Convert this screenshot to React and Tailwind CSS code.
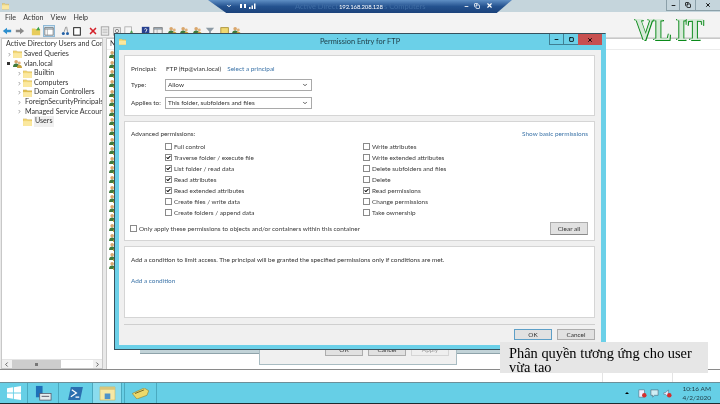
import { Check, ChevronDown, ChevronLeft, ChevronRight, Minus, Square, X, Copy } from "lucide-react";

const treeItems = [
  { label: "Saved Queries", indent: 5, arrow: "closed" },
  { label: "vlan.local", indent: 5, arrow: "open", icon: "domain" },
  { label: "Builtin", indent: 15, arrow: "closed" },
  { label: "Computers", indent: 15, arrow: "closed" },
  { label: "Domain Controllers", indent: 15, arrow: "closed", icon: "ou" },
  { label: "ForeignSecurityPrincipals", indent: 15, arrow: "closed" },
  { label: "Managed Service Accounts", indent: 15, arrow: "closed" },
  { label: "Users", indent: 15, selected: true },
];

const leftPerms = [
  ["Full control", false],
  ["Traverse folder / execute file", true],
  ["List folder / read data", true],
  ["Read attributes", true],
  ["Read extended attributes", true],
  ["Create files / write data", false],
  ["Create folders / append data", false],
];

const rightPerms = [
  ["Write attributes", false],
  ["Write extended attributes", false],
  ["Delete subfolders and files", false],
  ["Delete", false],
  ["Read permissions", true],
  ["Change permissions", false],
  ["Take ownership", false],
];

const userRows = Array.from({ length: 23 }, (_, i) => i);

const Folder = ({ color = "#f3d774", className = "w-[9px] h-[8px]" }) => (
  <svg viewBox="0 0 10 9" className={className}>
    <path d="M0 1h4l1 1h5v7H0z" fill={color} stroke="#c9a94a" strokeWidth="0.5" />
    <path d="M0 3.5h10V9H0z" fill="#fbe89f" />
  </svg>
);

const Users = () => (
  <svg viewBox="0 0 10 10" className="w-[9px] h-[9px] shrink-0">
    <circle cx="3.5" cy="3" r="2" fill="#d9a66c" />
    <path d="M0 9c0-3 1.5-4 3.5-4S7 6 7 9z" fill="#3f7a3c" />
    <circle cx="7" cy="4.5" r="1.6" fill="#e2b27a" />
    <path d="M4.5 10c0-2.5 1-3.5 2.500-3.500S10 7.500 10 10z" fill="#c9a23a" />
  </svg>
);

const ToolIcon = ({ children, className = "" }) => (
  <svg viewBox="0 0 12 12" className={`w-[10px] h-[10px] shrink-0 ${className}`}>
    {children}
  </svg>
);

const Perm = ({ label, on }) => (
  <div className="flex items-center gap-[2px] h-[11px] text-[6.4px] text-[#3a3a3a]">
    <span className="w-[7px] h-[7px] border-[0.5px] border-[#8a8a8a] bg-white flex items-center justify-center">
      {on && <Check className="w-[7px] h-[7px] text-black" strokeWidth={5} />}
    </span>
    <span className="whitespace-nowrap">{label}</span>
  </div>
);

const SelectBox = ({ value }) => (
  <div className="w-[147px] h-[12px] border border-[#a9a9a9] bg-white flex items-center justify-between pl-[2px] pr-[3px] text-[6.4px] text-[#333]">
    <span>{value}</span>
    <ChevronDown className="w-[6px] h-[6px] text-[#444]" strokeWidth={3.5} />
  </div>
);

const DialogBtn = ({ children, primary }) => (
  <div
    className={`w-[38px] h-[11px] flex items-center justify-center bg-[#e1e1e1] border text-[6.4px] text-[#333] ${
      primary ? "border-[#5d9fc7]" : "border-[#adadad]"
    }`}
  >
    {children}
  </div>
);

const RemoteBar = () => (
  <div className="absolute left-[208px] top-0 w-[304px] h-[13px] bg-gradient-to-b from-[#5f8fc4] via-[#24528f] to-[#1b427a] [clip-path:polygon(0_0,100%_0,95%_100%,6%_100%)] text-white">
    <ChevronDown className="absolute left-[18px] top-[3px] w-[6px] h-[6px]" strokeWidth={4} />
    <span className="absolute left-[32px] top-[4px] w-[6px] h-[4px] border-x-2 border-white" />
    <svg viewBox="0 0 8 7" className="absolute left-[41px] top-[2px] w-[8px] h-[7px]">
      <path d="M0 5h1.500v2H0zM2.500 3.500H4V7H2.500zM5 1.500h1.500V7H5z" fill="#fff" />
    </svg>
    <span className="absolute left-[87px] top-[1px] text-[7.5px] leading-[11px] text-[#3f6ca3] whitespace-nowrap">
      Active Direct
    </span>
    <span className="absolute left-[131px] top-[1px] w-[42px] text-center text-[6px] tracking-[-0.15px] leading-[11px] whitespace-nowrap">
      192.168.208.128
    </span>
    <span className="absolute left-[176px] top-[1px] text-[7.5px] leading-[11px] text-[#3f6ca3] whitespace-nowrap">
      s Computers
    </span>
    <Minus className="absolute left-[256px] top-[4px] w-[5px] h-[5px]" strokeWidth={4} />
    <Copy className="absolute left-[266px] top-[3px] w-[6px] h-[6px]" strokeWidth={3} />
    <X className="absolute left-[278px] top-[2px] w-[7px] h-[7px]" strokeWidth={4} />
  </div>
);

const Dialog = () => (
  <div className="absolute left-[114px] top-[33px] w-[492px] h-[317px] flex flex-col bg-[#6bd0e8] border border-[#37505c] border-r-[#6bd0e8]">
    <div className="relative h-[16px] shrink-0 flex items-center justify-center text-[7.4px] text-[#1d3a44]">
      <Folder className="absolute left-[4px] top-[3px] w-[7px] h-[9px]" />
      Permission Entry for FTP
      <div className="absolute right-[3px] top-0 flex h-[11px]">
        <div className="w-[15px] border border-t-0 border-[#3f7f93] flex items-center justify-center">
          <Minus className="w-[5px] h-[5px] text-black" strokeWidth={4} />
        </div>
        <div className="w-[14px] border-b border-[#3f7f93] flex items-center justify-center">
          <Square className="w-[5px] h-[5px] text-black" strokeWidth={4} />
        </div>
        <div className="w-[24px] bg-[#c75050] flex items-center justify-center">
          <X className="w-[6px] h-[6px] text-black" strokeWidth={3.5} />
        </div>
      </div>
    </div>
    <div className="flex-1 mx-[4px] mb-[4px] bg-[#f0f0f0] flex flex-col pl-[5px] pr-[6px] pt-[5px]">
      <div className="h-[61px] bg-white border border-[#d5d5d5] pl-[6px] pt-[7px] text-[6.4px] text-[#333] flex flex-col">
        <div className="flex items-center h-[11px]">
          <span className="w-[35px]">Principal:</span>
          <span>FTP (ftp@vlan.local)</span>
          <span className="ml-[6px] text-[#3c74a8]">Select a principal</span>
        </div>
        <div className="flex items-center mt-[4px] h-[14px]">
          <span className="w-[34px]">Type:</span>
          <SelectBox value="Allow" />
        </div>
        <div className="flex items-center mt-[4px] h-[14px]">
          <span className="w-[34px]">Applies to:</span>
          <SelectBox value="This folder, subfolders and files" />
        </div>
      </div>
      <div className="h-[120px] mt-[5px] bg-white border border-[#d5d5d5] pl-[5px] pr-[6px] pt-[6px] text-[6.4px] text-[#333] flex flex-col">
        <div className="flex justify-between h-[11px] items-center pl-[1px]">
          <span>Advanced permissions:</span>
          <span className="text-[#3c74a8]">Show basic permissions</span>
        </div>
        <div className="flex pl-[35px] mt-[2px]">
          <div className="w-[198px]">
            {leftPerms.map(([label, on]) => (
              <Perm key={label} label={label} on={on} />
            ))}
          </div>
          <div>
            {rightPerms.map(([label, on]) => (
              <Perm key={label} label={label} on={on} />
            ))}
          </div>
        </div>
        <div className="flex justify-between items-center mt-[4px]">
          <Perm label="Only apply these permissions to objects and/or containers within this container" />
          <div className="w-[38px] h-[13px] flex items-center justify-center bg-[#e1e1e1] border border-[#adadad] border-b-[#8a8a8a] text-[6.4px]">
            Clear all
          </div>
        </div>
      </div>
      <div className="h-[72px] mt-[5px] bg-white border border-[#d5d5d5] px-[6px] pt-[7px] text-[6.4px] text-[#333]">
        <div className="h-[11px] flex items-center">
          Add a condition to limit access. The principal will be granted the specified permissions only if conditions are met.
        </div>
        <div className="mt-[10px] h-[11px] flex items-center text-[#3c74a8]">Add a condition</div>
      </div>
      <div className="mt-[6px] pt-[4px] border-t border-[#cfcfcf] flex justify-end gap-[5px]">
        <DialogBtn primary>OK</DialogBtn>
        <DialogBtn>Cancel</DialogBtn>
      </div>
    </div>
  </div>
);

const BehindDialog = () => (
  <>
    <div className="absolute left-[140px] top-[346px] w-[360px] h-[8px] bg-[#c2d3d8] border-b border-[#8fa3aa]" />
    <div className="absolute left-[259px] top-[340px] w-[198px] h-[25px] bg-[#f0f0f0] border border-[#a9bcc2] border-t-0 flex justify-end gap-[5px] pr-[7px] text-[6.4px]">
      <div className="w-[38px] h-[16px] bg-[#e1e1e1] border border-[#adadad] flex items-end justify-center text-[#333]">OK</div>
      <div className="w-[38px] h-[16px] bg-[#e1e1e1] border border-[#adadad] flex items-end justify-center text-[#333]">Cancel</div>
      <div className="w-[38px] h-[16px] bg-[#efefef] border border-[#d5d5d5] flex items-end justify-center text-[#999]">Apply</div>
    </div>
  </>
);

const Toolbar = () => (
  <div className="h-[14px] bg-[#f3f3f3] flex items-center pl-[2px] border-b border-[#d8d8d8]">
    <ToolIcon><path d="M1 6l5-4v2.500h5v3H6V10z" fill="#2d8fce" /></ToolIcon>
    <ToolIcon className="ml-[3px]"><path d="M11 6L6 2v2.500H1v3h5V10z" fill="#8a8a8a" /></ToolIcon>
    <ToolIcon className="ml-[6px]"><path d="M1 3h4l1 1h5v7H1z" fill="#e7cc5c" /><path d="M6 5l3-4 2 4z" fill="#3aa14a" /></ToolIcon>
    <span className="ml-[2px] flex items-center justify-center bg-[#cfe3f1] border-[0.5px] border-[#8fb9d6] w-[12px] h-[12px] shrink-0">
      <ToolIcon><path d="M1 2h10v9H1z" fill="#fff" stroke="#777" /><path d="M1 2h10v2H1zM4 4v7" fill="#b9c6cf" stroke="#777" strokeWidth="0.6" /></ToolIcon>
    </span>
    <ToolIcon className="ml-[5px]"><path d="M7 1L5 7M8 1l1 6" stroke="#8a8a8a" fill="none" /><circle cx="4" cy="9" r="1.800" fill="#2360a5" /><circle cx="9" cy="9" r="1.800" fill="#2360a5" /></ToolIcon>
    <ToolIcon className="ml-[2px]"><rect x="2" y="2" width="8" height="9" fill="#fff" stroke="#222" strokeWidth="1.200" /></ToolIcon>
    <X className="ml-[6px] w-[10px] h-[10px] text-[#d4212a] shrink-0" strokeWidth={4} />
    <ToolIcon className="ml-[2px]"><rect x="1.500" y="1" width="9" height="10" fill="#eee" stroke="#999" /><path d="M3 4h6M3 6h6M3 8h6" stroke="#bbb" /></ToolIcon>
    <ToolIcon className="ml-[2px]"><rect x="2" y="2" width="8" height="9" fill="#eee" stroke="#999" /><circle cx="6" cy="6" r="2" fill="none" stroke="#777" /></ToolIcon>
    <ToolIcon className="ml-[2px]"><rect x="1" y="1" width="8" height="10" fill="#f6f6f6" stroke="#aaa" /><path d="M7 8l2-3 2 3z" fill="#45a049" /></ToolIcon>
    <ToolIcon className="ml-[7px]"><rect x="1" y="1" width="9" height="10" fill="#27408f" /><path d="M4 4c1-1.500 3-1 3 .500S5.500 6 5.500 7.500M5.500 9v1" stroke="#fff" fill="none" /></ToolIcon>
    <ToolIcon className="ml-[2px]"><rect x="1" y="2" width="10" height="9" fill="#eee" stroke="#777" /><path d="M1 2h10v2H1zM5 4v7" fill="#9fb1bd" stroke="#777" strokeWidth="0.500" /></ToolIcon>
    <span className="ml-[5px]"><Users /></span>
    <span className="ml-[3px]"><Users /></span>
    <span className="ml-[4px]"><Users /></span>
    <ToolIcon className="ml-[3px]"><path d="M1 2h10L7 6.500V11L5 10V6.500z" fill="#8c9aa5" /></ToolIcon>
    <ToolIcon className="ml-[5px]"><rect x="1" y="2" width="9" height="8" fill="#f0d870" stroke="#a58a2a" /></ToolIcon>
    <span className="ml-[2px]"><Users /></span>
  </div>
);

const TreePane = () => (
  <div className="w-[102px] ml-[1px] bg-white border border-[#c8c8c8] flex flex-col overflow-hidden">
    <div className="flex-1 pt-[1px]">
      <div className="flex items-center h-[9.6px] pl-[2px] text-[7.1px] text-[#333] whitespace-nowrap">
        <Folder color="#e8d488" />
        <span className="ml-[2px]">Active Directory Users and Com</span>
      </div>
      {treeItems.map((item) => (
        <div
          key={item.label}
          className="flex items-center h-[9.6px] text-[7.1px] text-[#333] whitespace-nowrap"
          style={{ paddingLeft: item.indent }}
        >
          <span className="w-[6px] text-[#666] flex items-center shrink-0">
            {item.arrow === "closed" && <ChevronRight className="w-[5px] h-[5px]" strokeWidth={3} />}
            {item.arrow === "open" && <span className="w-[3px] h-[3px] bg-[#333]" />}
          </span>
          {item.icon === "domain" ? <Users /> : <Folder color={item.icon === "ou" ? "#e0bf4f" : "#f3d774"} />}
          <span className={`ml-[2px] ${item.selected ? "bg-[#f0f0f0] px-[1px]" : ""}`}>{item.label}</span>
        </div>
      ))}
    </div>
    <div className="h-[9px] flex items-center bg-[#f0f0f0] border-t border-[#e4e4e4] shrink-0">
      <ChevronLeft className="w-[7px] h-[7px] text-[#555] mx-[1px]" strokeWidth={3} />
      <div className="w-[49px] h-[8px] bg-[#cdcdcd] flex items-center justify-center ml-[1px]">
        <span className="w-[3px] h-[3px] bg-[#777]" />
      </div>
      <div className="flex-1 h-full bg-white" />
      <ChevronRight className="w-[7px] h-[7px] text-[#555] mx-[1px]" strokeWidth={3} />
    </div>
  </div>
);

const ListPane = () => (
  <div className="flex-1 ml-[3px] bg-white border-l border-t border-[#c8c8c8] flex flex-col overflow-hidden">
    <div className="h-[11px] pl-[3px] text-[7.1px] text-[#333] border-b border-[#ececec] shrink-0 flex items-center">N</div>
    <div className="pl-[2px]">
      {userRows.map((i) => (
        <div key={i} className="h-[9.6px] flex items-center">
          <Users />
        </div>
      ))}
    </div>
  </div>
);

const Taskbar = () => (
  <div className="h-[22px] bg-[#66cfe6] border-t border-[#6d8f99] border-b border-b-[#1d2a2e] flex items-stretch shrink-0">
    <div className="w-[28px] flex items-center justify-center border-r border-[#4aa9bf]">
      <svg viewBox="0 0 16 16" className="w-[14px] h-[14px]">
        <path d="M0 2.500l6.800-1v6H0zM7.800 1.300L16 0v7.500H7.800zM0 8.500h6.800v6L0 13.500zM7.800 8.500H16V16l-8.200-1.200z" fill="#fff" />
      </svg>
    </div>
    <div className="w-[31px] flex items-center justify-center border-r border-[#4aa9bf]">
      <svg viewBox="0 0 18 18" className="w-[17px] h-[17px]">
        <rect x="1" y="1" width="7" height="12" fill="#1e6fb8" />
        <rect x="5" y="9" width="12" height="7" fill="#e6edf0" stroke="#556" strokeWidth="0.800" />
        <path d="M7 12h8" stroke="#556" />
      </svg>
    </div>
    <div className="w-[34px] flex items-center justify-center border-r border-[#4aa9bf]">
      <svg viewBox="0 0 16 14" className="w-[15px] h-[13px]">
        <path d="M3 0h13l-3 14H0z" fill="#2a6fb0" />
        <path d="M4 3l5 3.500-6 4M8 11h4" stroke="#fff" fill="none" strokeWidth="1.300" />
      </svg>
    </div>
    <div className="w-[29px] flex items-center justify-center bg-[#8adcee] border-r border-[#4aa9bf]">
      <svg viewBox="0 0 18 16" className="w-[17px] h-[15px]">
        <path d="M1 1h16v14H1z" fill="#f6e8a5" stroke="#c9b25a" strokeWidth="0.600" />
        <path d="M1 1h16v3H1z" fill="#d9c67a" />
        <path d="M6 8h6v6H6z" fill="#4f93c9" />
      </svg>
    </div>
    <div className="w-[3px] border-r border-[#4aa9bf]" />
    <div className="w-[32px] flex items-center justify-center border-r border-[#4aa9bf]">
      <svg viewBox="0 0 18 12" className="w-[17px] h-[11px]">
        <path d="M0 6l13-6 5 3-2 5-11 4z" fill="#ecd96b" stroke="#8c7a2a" strokeWidth="0.600" />
        <path d="M3 6l10-4" stroke="#6d5f22" />
      </svg>
    </div>
    <div className="ml-auto flex items-center pr-[9px] text-[#1f3a44]">
      <span className="w-0 h-0 border-x-[2px] border-x-transparent border-b-[2px] border-b-black mr-[9px]" />
      <svg viewBox="0 0 10 10" className="w-[9px] h-[9px] mr-[3px]">
        <rect x="1" y="1" width="6" height="8" fill="#eef" stroke="#567" strokeWidth="0.600" />
        <circle cx="7" cy="7" r="2.500" fill="#d32f2f" />
      </svg>
      <svg viewBox="0 0 10 10" className="w-[9px] h-[9px] mr-[4px]">
        <path d="M1 1h8v6H5L3 9V7H1z" fill="#cfeef5" stroke="#456" strokeWidth="0.600" />
      </svg>
      <svg viewBox="0 0 10 10" className="w-[9px] h-[9px] mr-[10px]">
        <path d="M1 4h2l3-3v8L3 6H1z" fill="#eef" stroke="#456" strokeWidth="0.500" />
        <circle cx="7" cy="7" r="2.500" fill="#d32f2f" />
      </svg>
      <div className="text-[6.5px] leading-[9px] text-right">
        <div>10:16 AM</div>
        <div>4/2/2020</div>
      </div>
    </div>
  </div>
);

export default function App() {
  return (
    <div className="relative w-[720px] h-[404px] overflow-hidden bg-white flex flex-col blur-[0.3px] font-['Lato','Noto_Sans',sans-serif]">
      {/* Title bar of the MMC window */}
      <div className="h-[12px] bg-[#c5d5dc] relative shrink-0">
        <Folder className="absolute left-[2px] top-[2px] w-[7px] h-[8px]" color="#e8d488" />
        <div className="absolute right-0 top-0 h-[11px] flex">
          <div className="w-[14px] border border-t-0 border-[#8ba0a9] flex items-center justify-center">
            <Minus className="w-[5px] h-[5px] text-black" strokeWidth={4} />
          </div>
          <div className="w-[15px] border-b border-[#8ba0a9] flex items-center justify-center">
            <Copy className="w-[6px] h-[6px] text-black" strokeWidth={3} />
          </div>
          <div className="w-[25px] border border-t-0 border-r-0 border-[#8ba0a9] flex items-center justify-center">
            <X className="w-[6px] h-[6px] text-black" strokeWidth={3.5} />
          </div>
        </div>
      </div>
      <div className="h-[12px] bg-[#f3f3f3] flex items-center gap-[7px] pl-[5px] text-[7.1px] text-[#333] shrink-0">
        <span>File</span>
        <span>Action</span>
        <span>View</span>
        <span>Help</span>
      </div>
      <Toolbar />
      <div className="h-[332px] flex bg-[#e9e9e9] border-b border-[#8a8a8a] shrink-0">
        <TreePane />
        <ListPane />
      </div>
      <div className="h-[12px] bg-white flex shrink-0">
        <div className="w-[603px] border-r border-[#e4e4e4]" />
        <div className="w-[70px] border-r border-[#e4e4e4]" />
      </div>
      <Taskbar />

      <RemoteBar />
      <BehindDialog />
      <Dialog />

      <div className="absolute left-[635px] top-[15px] origin-top scale-y-125 text-[26px] leading-[24px] font-bold whitespace-nowrap font-['Liberation_Serif',serif] text-[#d7ead9] [text-shadow:1px_1px_0_#0a8a1a,-1px_0_0_#0a8a1a]">
        VL IT
      </div>

      <div className="absolute left-[500px] top-[342px] w-[208px] h-[31px] overflow-hidden bg-[#e6e6e6] pl-[9px] pt-[4px] text-[14.4px] leading-[14px] text-black whitespace-nowrap font-['Liberation_Serif',serif]">
        Phân quyền tương ứng cho user
        <br />
        vừa tạo
      </div>
    </div>
  );
}
